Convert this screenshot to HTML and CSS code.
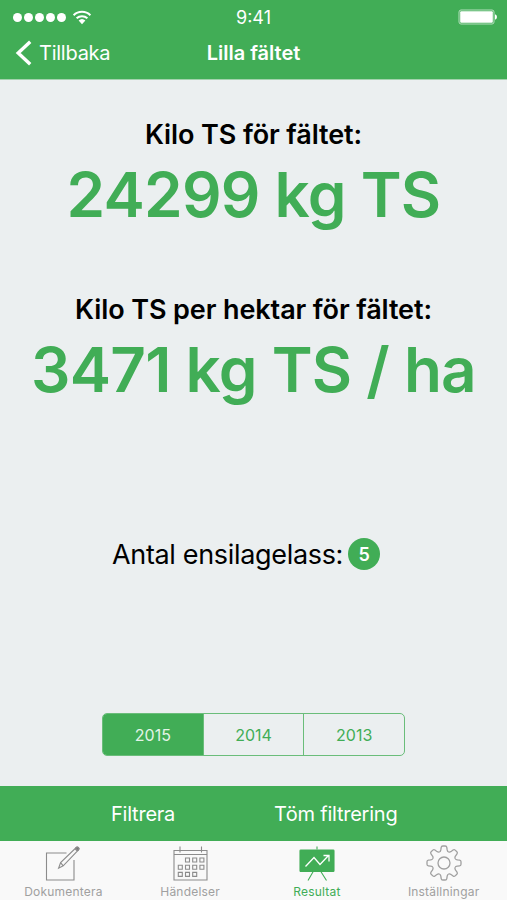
FILE: index.html
```html
<!DOCTYPE html>
<html lang="sv">

<head>
    <meta charset="utf-8">
    <meta name="viewport" content="width=device-width, initial-scale=1.0">
    <title>Lilla fältet</title>
    <link rel="stylesheet" href="styles.css">
</head>

<body>
    <header>
        <div class="status">
            <div class="signal">
                <i></i><i></i><i></i><i></i><i></i>
                <svg class="wifi" width="20" height="15" viewBox="0 0 20 15">
                    <path d="M1.6 5.2a12 12 0 0 1 16.8 0M4.6 8.3a7.8 7.8 0 0 1 10.8 0" />
                    <path class="fill" d="M6.6 10.6a5 5 0 0 1 6.8 0L10 14.2z" />
                </svg>
            </div>
            <span class="clock">9:41</span>
            <svg class="battery" width="40" height="16" viewBox="0 0 40 16">
                <rect class="frame" x="1" y="1" width="35" height="14" rx="2" />
                <rect x="2.2" y="2.2" width="32.6" height="11.6" rx="1" />
                <path d="M37 5.2q2 .6 2 2.8t-2 2.8z" />
            </svg>
        </div>
        <div class="titlebar">
            <a class="back">
                <svg width="18" height="26" viewBox="0 0 18 26">
                    <path d="M16.2 1.8L4.2 13l12 11.2" />
                </svg>
                <span>Tillbaka</span>
            </a>
            <h1>Lilla fältet</h1>
        </div>
    </header>

    <main>
        <section class="result">
            <h2>Kilo TS för fältet:</h2>
            <p>24299 kg TS</p>
        </section>
        <section class="result">
            <h2>Kilo TS per hektar för fältet:</h2>
            <p>3471 kg TS / ha</p>
        </section>
        <div class="loads">
            <span>Antal ensilagelass:</span>
            <span class="count">5</span>
        </div>
        <div class="years">
            <button class="valgt">2015</button>
            <button>2014</button>
            <button>2013</button>
        </div>
    </main>

    <div class="toolbar">
        <a>Filtrera</a>
        <a>Töm filtrering</a>
    </div>

    <nav>
        <a class="tab">
            <svg width="36" height="36" viewBox="0 0 36 36">
                <path d="M21.5 8H1.500v27H29V15" />
                <path d="M13.600 23.200l2-5.600L31.500 2.300q1-.6 2 .4t.2 2L18.200 20.800zM15.600 17.600l2.600 3.200M30 3.800l2.700 2.600" />
                <path class="dark" d="M31.500 2.300q1-.6 2 .4t.2 2l-.9.9-2.300-2.300z" />
            </svg>
            <span>Dokumentera</span>
        </a>
        <a class="tab">
            <svg width="36" height="36" viewBox="-1 0 36 36">
                <path d="M1 5.500h33V35H1zM1 9.500h33M7 1.500v6M28.500 1.500v6" />
                <path d="M12.500 13h4v4h-4zM19.700 13h4v4h-4zM26.900 13h4v4h-4zM5.300 20.200h4v4h-4zM12.500 20.200h4v4h-4zM19.700 20.200h4v4h-4zM26.900 20.200h4v4h-4zM5.300 27.400h4v4h-4zM12.500 27.400h4v4h-4zM19.700 27.400h4v4h-4z" />
            </svg>
            <span>Händelser</span>
        </a>
        <a class="tab active">
            <svg width="36" height="36" viewBox="0 0 36 36">
                <rect x="1" y="5" width="34" height="21.500" rx=".8" />
                <path d="M18 1.500v3M14.500 26L9 35.500M21.500 26l6 9.500" />
                <path class="graph" d="M6.500 21.500l8.500-9 6 7 8.500-9M24.500 10.500h5.500v6" />
            </svg>
            <span>Resultat</span>
        </a>
        <a class="tab">
            <svg class="gear" width="36" height="36" viewBox="-18 -18 36 36">
                <defs>
                    <path id="tooth" d="M-4.600 -11.100C-3.200 -11.600 -3.300 -12.500 -3.100 -13.600L-2.800 -15.600Q-2.600 -17 -1.200 -17H1.200Q2.600 -17 2.800 -15.600L3.100 -13.600C3.300 -12.500 3.200 -11.600 4.600 -11.100" />
                </defs>
                <use href="#tooth" />
                <use href="#tooth" transform="rotate(45)" />
                <use href="#tooth" transform="rotate(90)" />
                <use href="#tooth" transform="rotate(135)" />
                <use href="#tooth" transform="rotate(180)" />
                <use href="#tooth" transform="rotate(225)" />
                <use href="#tooth" transform="rotate(270)" />
                <use href="#tooth" transform="rotate(315)" />
                <circle r="6" />
            </svg>
            <span>Inställningar</span>
        </a>
    </nav>
</body>

</html>
```
FILE: styles.css
```css
* {
    box-sizing: border-box;
}

body {
    display: flex;
    flex-direction: column;
    height: 900px;
    margin: 0;
    font-family: 'Inter', sans-serif;
    background: #ebeff0;
    overflow: hidden;
}

h1,
h2,
p {
    margin: 0;
    white-space: nowrap;
}

header {
    height: 80px;
    color: white;
    background: #41ad56;
    border-bottom: 1px solid #a3d2ad;
}

.status {
    display: grid;
    grid-template-columns: 1fr auto 1fr;
    align-items: center;
    height: 34px;
    padding: 0 9px;
}

.signal {
    display: flex;
    align-items: center;
    gap: 2px;
    padding-left: 4px;
}

.signal i {
    width: 9px;
    height: 9px;
    border-radius: 50%;
    background: white;
}

.wifi {
    margin-left: 4px;
    fill: none;
    stroke: white;
    stroke-width: 2;
}

.wifi .fill {
    fill: white;
    stroke: none;
}

.clock {
    font-size: 18px;
}

.battery {
    justify-self: end;
    fill: white;
}

.battery .frame {
    fill: none;
    stroke: #b5dfbd;
}

.titlebar {
    display: grid;
    grid-template-columns: 1fr auto 1fr;
    align-items: center;
    height: 38px;
    padding: 0 14px;
}

.back {
    display: flex;
    align-items: center;
    gap: 7px;
    font-size: 20px;
    letter-spacing: -0.25px;
}

.back svg {
    fill: none;
    stroke: white;
    stroke-width: 3.4;
}

h1 {
    font-size: 20px;
    font-weight: 600;
}

main {
    display: flex;
    flex-direction: column;
    align-items: center;
    height: 706px;
    padding-top: 37px;
}

.result {
    height: 175px;
    text-align: center;
}

h2 {
    font-size: 27px;
    font-weight: 600;
    line-height: 36px;
    letter-spacing: -0.1px;
}

.result p {
    margin-top: 4px;
    font-size: 62px;
    font-weight: 600;
    line-height: 76px;
    letter-spacing: -0.75px;
    color: #41ad56;
}

.loads {
    display: flex;
    align-items: center;
    gap: 5px;
    height: 36px;
    margin: 69px 15px 0 0;
    font-size: 27px;
    letter-spacing: -0.33px;
}

.count {
    width: 32px;
    height: 32px;
    border-radius: 50%;
    font-size: 18px;
    font-weight: 600;
    line-height: 33px;
    text-align: center;
    color: white;
    background: #41ad56;
}

.years {
    display: flex;
    width: 303px;
    height: 43px;
    margin-top: 141px;
    border: 1px solid #6abd7a;
    border-radius: 5px;
    overflow: hidden;
}

button {
    flex: 1;
    padding: 0;
    border: 0;
    border-left: 1px solid #6abd7a;
    font-family: inherit;
    font-size: 16px;
    color: #41ad56;
    background: none;
}

button:first-child {
    border-left: 0;
}

.valgt {
    color: #e4f4e7;
    background: #41ad56;
}

.toolbar {
    display: flex;
    align-items: center;
    height: 55px;
    padding-left: 111px;
    gap: 99px;
    font-size: 20px;
    letter-spacing: -0.23px;
    color: white;
    background: #41ad56;
}

nav {
    display: grid;
    grid-template-columns: repeat(4, 1fr);
    height: 59px;
    background: #f9f9f9;
}

.tab {
    display: flex;
    flex-direction: column;
    align-items: center;
    padding-top: 4px;
    font-size: 12px;
    line-height: 16px;
    letter-spacing: 0.2px;
    color: #a0a0a0;
}

.tab svg {
    flex-shrink: 0;
    margin-bottom: 3px;
    fill: none;
    stroke: #8c8c8c;
    stroke-width: 1.1;
}

.tab .dark {
    fill: #777;
}

.tab .gear {
    stroke: #a0a0a0;
    stroke-width: 1.3;
}

.active {
    color: #41ad56;
}

.active svg {
    stroke: #41ad56;
}

.active rect {
    fill: #41ad56;
}

.active .graph {
    stroke: white;
    stroke-width: 1.3;
}
```
